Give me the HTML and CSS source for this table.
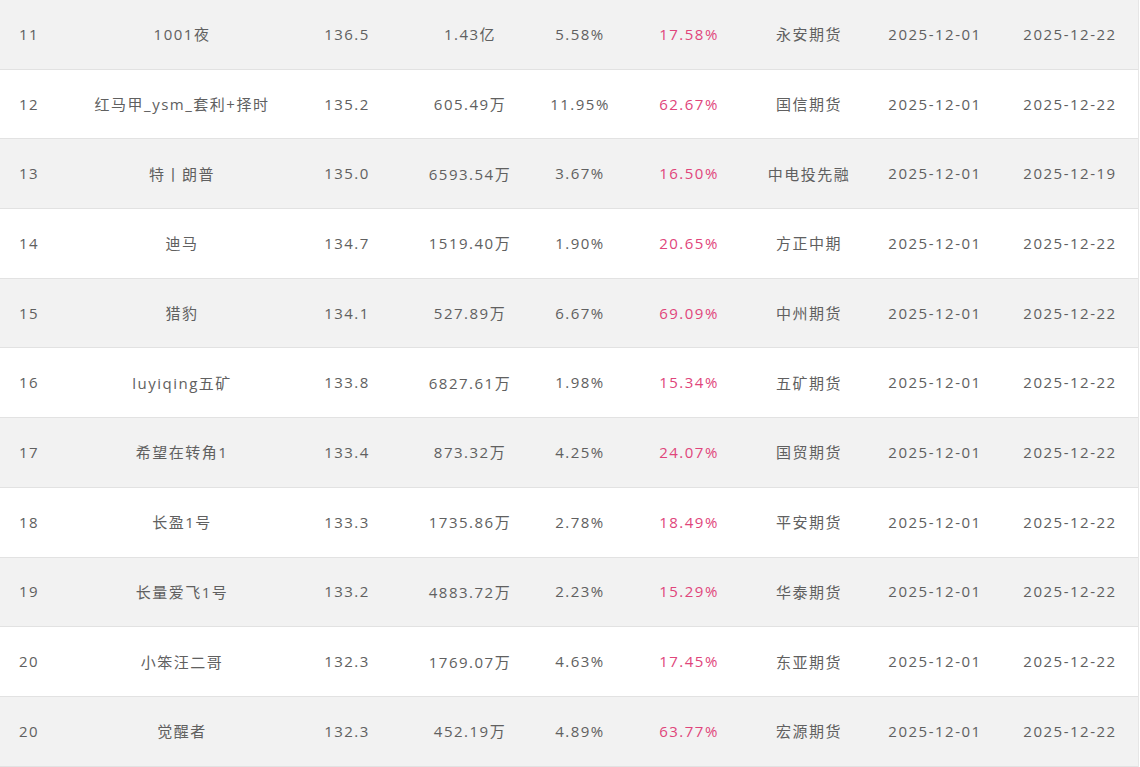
FILE: index.html
```html
<!DOCTYPE html>
<html lang="zh-CN">
<head>
<meta charset="utf-8">
<title>排行</title>
<link rel="stylesheet" href="styles.css">
</head>
<body>
<div class="table">
  <div class="row odd"><div class="c rank">11</div><div class="c name">1001夜</div><div class="c">136.5</div><div class="c">1.43亿</div><div class="c">5.58%</div><div class="c red">17.58%</div><div class="c">永安期货</div><div class="c">2025-12-01</div><div class="c last">2025-12-22</div></div>
  <div class="row"><div class="c rank">12</div><div class="c name">红马甲_ysm_套利+择时</div><div class="c">135.2</div><div class="c">605.49万</div><div class="c">11.95%</div><div class="c red">62.67%</div><div class="c">国信期货</div><div class="c">2025-12-01</div><div class="c last">2025-12-22</div></div>
  <div class="row odd"><div class="c rank">13</div><div class="c name">特丨朗普</div><div class="c">135.0</div><div class="c">6593.54万</div><div class="c">3.67%</div><div class="c red">16.50%</div><div class="c">中电投先融</div><div class="c">2025-12-01</div><div class="c last">2025-12-19</div></div>
  <div class="row"><div class="c rank">14</div><div class="c name">迪马</div><div class="c">134.7</div><div class="c">1519.40万</div><div class="c">1.90%</div><div class="c red">20.65%</div><div class="c">方正中期</div><div class="c">2025-12-01</div><div class="c last">2025-12-22</div></div>
  <div class="row odd"><div class="c rank">15</div><div class="c name">猎豹</div><div class="c">134.1</div><div class="c">527.89万</div><div class="c">6.67%</div><div class="c red">69.09%</div><div class="c">中州期货</div><div class="c">2025-12-01</div><div class="c last">2025-12-22</div></div>
  <div class="row"><div class="c rank">16</div><div class="c name">luyiqing五矿</div><div class="c">133.8</div><div class="c">6827.61万</div><div class="c">1.98%</div><div class="c red">15.34%</div><div class="c">五矿期货</div><div class="c">2025-12-01</div><div class="c last">2025-12-22</div></div>
  <div class="row odd"><div class="c rank">17</div><div class="c name">希望在转角1</div><div class="c">133.4</div><div class="c">873.32万</div><div class="c">4.25%</div><div class="c red">24.07%</div><div class="c">国贸期货</div><div class="c">2025-12-01</div><div class="c last">2025-12-22</div></div>
  <div class="row"><div class="c rank">18</div><div class="c name">长盈1号</div><div class="c">133.3</div><div class="c">1735.86万</div><div class="c">2.78%</div><div class="c red">18.49%</div><div class="c">平安期货</div><div class="c">2025-12-01</div><div class="c last">2025-12-22</div></div>
  <div class="row odd"><div class="c rank">19</div><div class="c name">长量爱飞1号</div><div class="c">133.2</div><div class="c">4883.72万</div><div class="c">2.23%</div><div class="c red">15.29%</div><div class="c">华泰期货</div><div class="c">2025-12-01</div><div class="c last">2025-12-22</div></div>
  <div class="row"><div class="c rank">20</div><div class="c name">小笨汪二哥</div><div class="c">132.3</div><div class="c">1769.07万</div><div class="c">4.63%</div><div class="c red">17.45%</div><div class="c">东亚期货</div><div class="c">2025-12-01</div><div class="c last">2025-12-22</div></div>
  <div class="row odd"><div class="c rank">20</div><div class="c name">觉醒者</div><div class="c">132.3</div><div class="c">452.19万</div><div class="c">4.89%</div><div class="c red">63.77%</div><div class="c">宏源期货</div><div class="c">2025-12-01</div><div class="c last">2025-12-22</div></div>
</div>
</body>
</html>
```

FILE: styles.css
```css
html, body {
  margin: 0;
  padding: 0;
  background: #ffffff;
}
body {
  font-family: "Open Sans", "Noto Sans CJK SC", sans-serif;
  font-size: 15px;
  letter-spacing: 1.5px;
  color: #606060;
  overflow: hidden;
}
.table {
  width: 1138px;
  border-right: 1px solid #e6e6e6;
}
.row {
  display: grid;
  grid-template-columns: 58px 248px 82px 164px 56px 162px 78px 174px 116px;
  height: 69.7px;
  box-sizing: border-box;
  border-bottom: 1px solid #e2e2e2;
  background: #ffffff;
}
.row.odd {
  background: #f2f2f2;
}
.c {
  display: flex;
  align-items: center;
  justify-content: center;
  white-space: nowrap;
  padding-bottom: 1px;
}
.c.last {
  padding-right: 20px;
}
.red {
  color: #e0457b;
}
```
